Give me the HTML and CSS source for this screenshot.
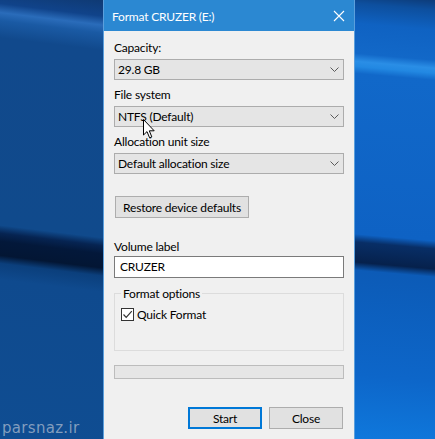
FILE: index.html
```html
<!DOCTYPE html>
<html>
<head>
<meta charset="utf-8">
<title>Format CRUZER (E:)</title>
<link rel="stylesheet" href="styles.css">
</head>
<body>
  <div class="desktop">
    <div class="window">
      <div class="titlebar">
        <span class="title">Format CRUZER (E:)</span>
        <svg class="close" width="12" height="12" viewBox="0 0 12 12">
          <path d="M1 1 L11 11 M11 1 L1 11" stroke="#fff" stroke-width="1.1" fill="none"/>
        </svg>
      </div>
      <div class="content">
        <div class="field-label">Capacity:</div>
        <div class="combo">
          <span>29.8 GB</span>
          <svg class="arrow" width="9" height="5" viewBox="0 0 9 5"><path d="M0.5 0.5 L4.5 4.5 L8.5 0.5" stroke="#5a5a5a" fill="none"/></svg>
        </div>

        <div class="field-label">File system</div>
        <div class="combo">
          <span>NTFS (Default)</span>
          <svg class="arrow" width="9" height="5" viewBox="0 0 9 5"><path d="M0.5 0.5 L4.5 4.5 L8.5 0.5" stroke="#5a5a5a" fill="none"/></svg>
        </div>

        <div class="field-label">Allocation unit size</div>
        <div class="combo">
          <span>Default allocation size</span>
          <svg class="arrow" width="9" height="5" viewBox="0 0 9 5"><path d="M0.5 0.5 L4.5 4.5 L8.5 0.5" stroke="#5a5a5a" fill="none"/></svg>
        </div>

        <button class="btn restore">Restore device defaults</button>

        <div class="field-label volume">Volume label</div>
        <div class="textbox">CRUZER</div>

        <fieldset class="options">
          <legend>Format options</legend>
          <label class="check">
            <span class="box">
              <svg width="11" height="11" viewBox="0 0 11 11"><path d="M1.5 5.5 L4.2 8.3 L9.8 2.2" stroke="#333" stroke-width="1.2" fill="none"/></svg>
            </span>
            Quick Format
          </label>
        </fieldset>

        <div class="progress"></div>

        <div class="actions">
          <button class="btn default">Start</button>
          <button class="btn">Close</button>
        </div>
      </div>
    </div>

    <!-- mouse pointer resting over the file system box -->
    <svg class="cursor" width="13" height="20" viewBox="0 0 13 20">
      <path d="M0.5 0.5 L0.5 16 L4 12.6 L6.6 18.8 L8.8 17.9 L6.3 11.8 L11.2 11.8 Z" fill="#fff" stroke="#000" stroke-width="1"/>
    </svg>

    <div class="watermark">parsnaz.ir</div>
  </div>
</body>
</html>
```
FILE: styles.css
```css
body, html {
  margin: 0;
  padding: 0;
}

body {
  width: 435px;
  height: 439px;
  overflow: hidden;
  font-family: Lato, "Noto Sans", sans-serif;
  font-size: 12px;
  letter-spacing: -0.2px;
  color: #000;
}

/* wallpaper: left strip and right strip around the dialog */
.desktop {
  position: relative;
  height: 439px;
  padding-left: 103px;
  background-color: #0d58ae;
  background-repeat: no-repeat;
  background-image:
    linear-gradient(187deg,
      #0f3a74 0, #10438a 16px, #2a6cba 25px, #1a5aa4 33px, #11498c 50px,
      #104a8c 236px, #062452 244px, #03183a 252px, #031634 266px, #0b3f7c 274px,
      #0f4a8e 290px, #0f4d92 100%),
    linear-gradient(185deg,
      #0d3c7a 0, #0d4f9e 10px, #0f62c2 30px, #1268c8 60px, #2a8ee6 68px, #2288e2 73px,
      #1168c9 80px, #0e62c4 240px, #082e66 248px, #06214c 268px, #0c5bb7 276px,
      #0d66c9 380px, #0f78dc 100%);
  background-size: 103px 439px, 80px 439px;
  background-position: 0 0, 355px 0;
}

/* the format dialog */
.window {
  width: 250px;
  height: 439px;
  background: #f0f0f0;
  border-left: 1px solid #5b9fdc;
  border-right: 1px solid #5b9fdc;
}

.titlebar {
  height: 31px;
  background: #2b88d2;
  display: flex;
  align-items: center;
  justify-content: space-between;
  padding: 0 9px 0 8px;
  color: #fff;
}

.title {
  font-size: 12px;
  padding-top: 1px;
}

.close {
  margin-top: 1px;
}

.content {
  padding: 9px 10px 0 10px;
}

.field-label {
  line-height: 15px;
  height: 15px;
  margin-bottom: 4px;
}

.combo {
  height: 19px;
  border: 1px solid #acacac;
  background: #e5e5e5;
  display: flex;
  align-items: center;
  justify-content: space-between;
  padding: 0 4px 0 3px;
  margin-bottom: 7px;
}

.btn {
  font-family: inherit;
  font-size: 12px;
  letter-spacing: inherit;
  color: #000;
  background: #e1e1e1;
  border: 1px solid #adadad;
  height: 22px;
  padding: 0;
  box-sizing: border-box;
}

.restore {
  display: block;
  width: 134px;
  margin: 22px 0 21px 1px;
}

.field-label.volume {
  margin-bottom: 2px;
}

.textbox {
  height: 20px;
  line-height: 20px;
  border: 1px solid #7a7a7a;
  background: #fff;
  padding: 0 5px;
}

.options {
  margin: 8px 0 0 0;
  padding: 6px 6px 28px 6px;
  border: 1px solid #dcdcdc;
}

.options legend {
  padding: 0 2px;
  line-height: 15px;
}

.check {
  display: flex;
  align-items: center;
  gap: 3px;
  line-height: 15px;
}

.box {
  width: 11px;
  height: 11px;
  border: 1px solid #333;
  background: #fff;
  display: inline-flex;
}

.progress {
  height: 12px;
  margin-top: 14px;
  border: 1px solid #bcbcbc;
  background: #e6e6e6;
}

.actions {
  display: flex;
  justify-content: flex-end;
  gap: 7px;
  padding-right: 1px;
  margin-top: 28px;
}

.actions .btn {
  width: 74px;
}

.btn.default {
  border: 2px solid #0078d7;
}

.cursor {
  position: absolute;
  left: 143px;
  top: 119px;
}

.watermark {
  position: absolute;
  left: 2px;
  top: 419px;
  font-family: "DejaVu Sans", sans-serif;
  font-size: 15px;
  letter-spacing: 0.3px;
  color: rgba(170, 185, 205, 0.75);
}
```
